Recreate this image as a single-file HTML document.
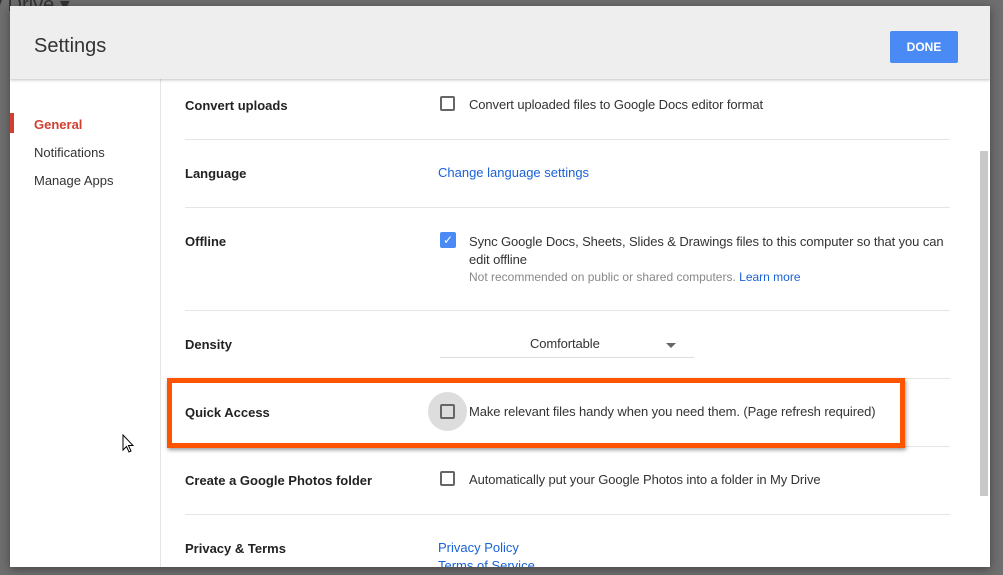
<!DOCTYPE html>
<html><head><style>
*{margin:0;padding:0;box-sizing:border-box}
body{width:1003px;height:575px;background:#6f6f6f;font-family:"Liberation Sans",Arial,sans-serif;position:relative;overflow:hidden;color:#333}
.a{position:absolute}
.dlg{left:10px;top:6px;width:980px;height:561px;background:#fff;overflow:hidden;box-shadow:0 2px 10px rgba(0,0,0,.4)}
.hdr{left:0;top:0;width:980px;height:73px;background:#eeeeee;box-shadow:0 1px 3px rgba(0,0,0,.25);z-index:2}
.lbl{left:175px;font-size:13px;font-weight:bold;color:#222}
.sep{left:175px;width:765px;height:1px;background:#e5e5e5}
.txt{font-size:13px;color:#333;letter-spacing:-0.1px}
.cb{width:15px;height:15px;border:2px solid #666;border-radius:2px}
.lnk{color:#1a62d6;font-size:13px}
</style></head><body>
<div class="a" style="font-size:20px;color:#333;left:-8px;top:-8px">y Drive ▾</div>
<div class="a dlg">
 <div class="a hdr"><div class="a" style="left:24px;top:29px;font-size:20px;color:#333">Settings</div>
 <div class="a" style="left:880px;top:25px;width:68px;height:32px;background:#4a8af4;border-radius:2px;color:#fff;font-size:12px;font-weight:bold;text-align:center;line-height:32px">DONE</div></div>
 <div class="a" style="left:150px;top:73px;width:1px;height:500px;background:#e5e5e5"></div>
 <div class="a" style="left:0;top:107px;width:4px;height:20px;background:#d23f31"></div>
 <div class="a" style="left:24px;top:111px;font-size:13px;font-weight:bold;color:#d23f31">General</div>
 <div class="a" style="left:24px;top:139px;font-size:13px;color:#333">Notifications</div>
 <div class="a" style="left:24px;top:167px;font-size:13px;color:#333">Manage Apps</div>
 <div class="a" style="left:970px;top:145px;width:8px;height:345px;background:#c8c8c8"></div>

 <div class="a lbl" style="top:92px">Convert uploads</div>
 <div class="a cb" style="left:430px;top:90px"></div>
 <div class="a txt" style="left:459px;top:91px">Convert uploaded files to Google Docs editor format</div>
 <div class="a sep" style="top:133px"></div>
 <div class="a lbl" style="top:160px">Language</div>
 <div class="a lnk" style="left:428px;top:159px">Change language settings</div>
 <div class="a sep" style="top:201px"></div>
 <div class="a lbl" style="top:228px">Offline</div>
 <div class="a" style="left:430px;top:226px;width:16px;height:16px;background:#4a8af4;border-radius:2px;color:#fff;font-size:12px;text-align:center;line-height:16px">✓</div>
 <div class="a txt" style="left:459px;top:227px;line-height:18px;width:490px">Sync Google Docs, Sheets, Slides &amp; Drawings files to this computer so that you can edit offline</div>
 <div class="a" style="left:459px;top:264px;font-size:12px;color:#888">Not recommended on public or shared computers. <span style="color:#1a62d6">Learn more</span></div>
 <div class="a sep" style="top:304px"></div>
 <div class="a lbl" style="top:331px">Density</div>
 <div class="a txt" style="left:520px;top:330px">Comfortable</div>
 <div class="a" style="left:656px;top:337px;width:0;height:0;border-left:5px solid transparent;border-right:5px solid transparent;border-top:5px solid #666"></div>
 <div class="a" style="left:430px;top:351px;width:254px;height:1px;background:#ddd"></div>
 <div class="a sep" style="top:372px"></div>
 <div class="a lbl" style="top:399px">Quick Access</div>
 <div class="a" style="left:418px;top:386px;width:39px;height:39px;border-radius:50%;background:#ddd"></div>
 <div class="a cb" style="left:430px;top:398px"></div>
 <div class="a txt" style="left:459px;top:398px">Make relevant files handy when you need them. (Page refresh required)</div>
 <div class="a sep" style="top:440px"></div>
 <div class="a lbl" style="top:467px">Create a Google Photos folder</div>
 <div class="a cb" style="left:430px;top:465px"></div>
 <div class="a txt" style="left:459px;top:466px">Automatically put your Google Photos into a folder in My Drive</div>
 <div class="a sep" style="top:508px"></div>
 <div class="a lbl" style="top:535px">Privacy &amp; Terms</div>
 <div class="a lnk" style="left:428px;top:534px">Privacy Policy</div>
 <div class="a lnk" style="left:428px;top:552px">Terms of Service</div>
 <div class="a" style="left:157px;top:372px;width:738px;height:70px;border:5px solid #ff5500;box-shadow:1px 2px 4px rgba(0,0,0,.4)"></div>
</div>
<svg class="a" style="left:122px;top:434px" width="12" height="20" viewBox="0 0 12 20"><path d="M1 1 L1 16 L4.5 12.5 L7 18 L9 17 L6.5 11.5 L11 11.5 Z" fill="#fff" stroke="#000" stroke-width="1"/></svg>
</body></html>
